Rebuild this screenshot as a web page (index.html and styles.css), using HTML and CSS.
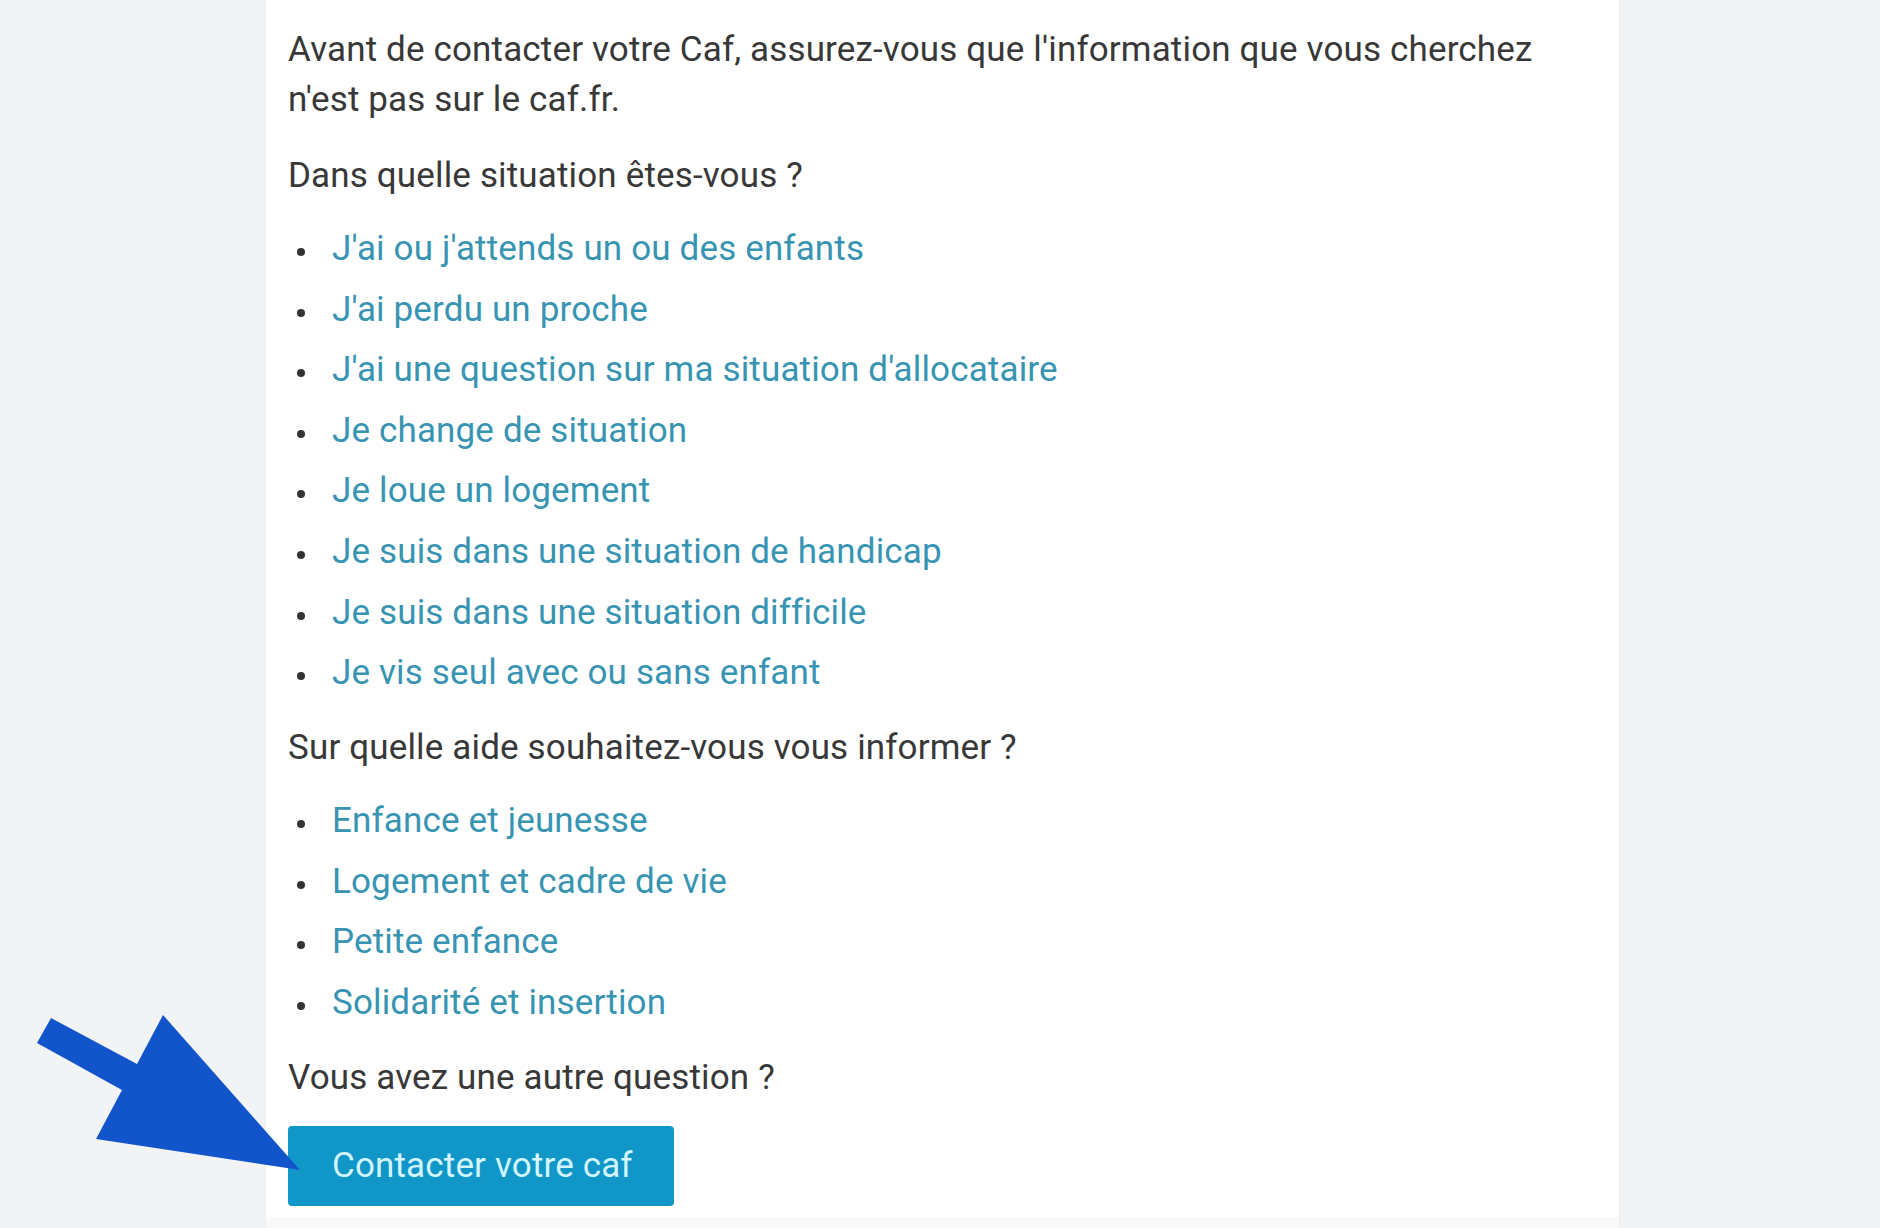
FILE: index.html
```html
<!DOCTYPE html>
<html lang="fr">
<head>
  <meta charset="UTF-8">
  <meta name="viewport" content="width=device-width, initial-scale=1.0">
  <title>Contacter votre Caf</title>
  <link rel="stylesheet" href="styles.css">
</head>
<body>
  <main class="panel">
    <p class="intro">Avant de contacter votre Caf, assurez-vous que l'information que vous cherchez n'est pas sur le caf.fr.</p>

    <p class="question">Dans quelle situation êtes-vous ?</p>
    <ul class="links">
      <li><a href="#">J'ai ou j'attends un ou des enfants</a></li>
      <li><a href="#">J'ai perdu un proche</a></li>
      <li><a href="#">J'ai une question sur ma situation d'allocataire</a></li>
      <li><a href="#">Je change de situation</a></li>
      <li><a href="#">Je loue un logement</a></li>
      <li><a href="#">Je suis dans une situation de handicap</a></li>
      <li><a href="#">Je suis dans une situation difficile</a></li>
      <li><a href="#">Je vis seul avec ou sans enfant</a></li>
    </ul>

    <p class="question">Sur quelle aide souhaitez-vous vous informer ?</p>
    <ul class="links">
      <li><a href="#">Enfance et jeunesse</a></li>
      <li><a href="#">Logement et cadre de vie</a></li>
      <li><a href="#">Petite enfance</a></li>
      <li><a href="#">Solidarité et insertion</a></li>
    </ul>

    <p class="question">Vous avez une autre question ?</p>
    <a class="contact-btn" href="#">Contacter votre caf</a>
  </main>

  <!-- annotation arrow pointing at the button -->
  <svg class="arrow" width="320" height="200" viewBox="0 1000 320 200">
    <polygon points="51,1018 137,1064 163,1015 300,1170 96,1139 122,1090 37,1043" fill="#1254ca"/>
  </svg>
</body>
</html>
```

FILE: styles.css
```css
* {
  margin: 0;
  padding: 0;
  box-sizing: border-box;
}
body {
  font-family: Roboto, "Liberation Sans", sans-serif;
  background: #f2f3f5;
  color: #383838;
  height: 1228px;
  overflow: hidden;
}
.panel {
  margin-left: 266px;
  width: 1353px;
  height: 1228px;
  background: #fff;
  border-bottom: 11px solid #f9f9fa;
  box-shadow: 0 0 4px rgba(0,0,0,0.04);
  padding: 25px 22px 0;
  font-size: 35px;
  line-height: 48px;
  letter-spacing: 0.15px;
}
.intro {
  max-width: 1280px;
  line-height: 50px;
}
.question {
  margin-top: 27px;
}
.links {
  list-style: none;
  margin-top: 25px;
}
.links li {
  position: relative;
  padding-left: 44px;
}
.links li + li {
  margin-top: 12.6px;
}
.links li::before {
  content: "";
  position: absolute;
  left: 9px;
  top: 23px;
  width: 8px;
  height: 8px;
  border-radius: 50%;
  background: #333;
}
.links a {
  color: #3794b2;
  text-decoration: none;
}
.contact-btn {
  display: inline-block;
  margin-top: 24px;
  width: 386px;
  height: 80px;
  padding: 16px 0 0 44px;
  background: #1196c8;
  border-radius: 4px;
  color: #d2f5ff;
  text-decoration: none;
}
.arrow {
  position: absolute;
  left: 0;
  top: 1000px;
}
```
